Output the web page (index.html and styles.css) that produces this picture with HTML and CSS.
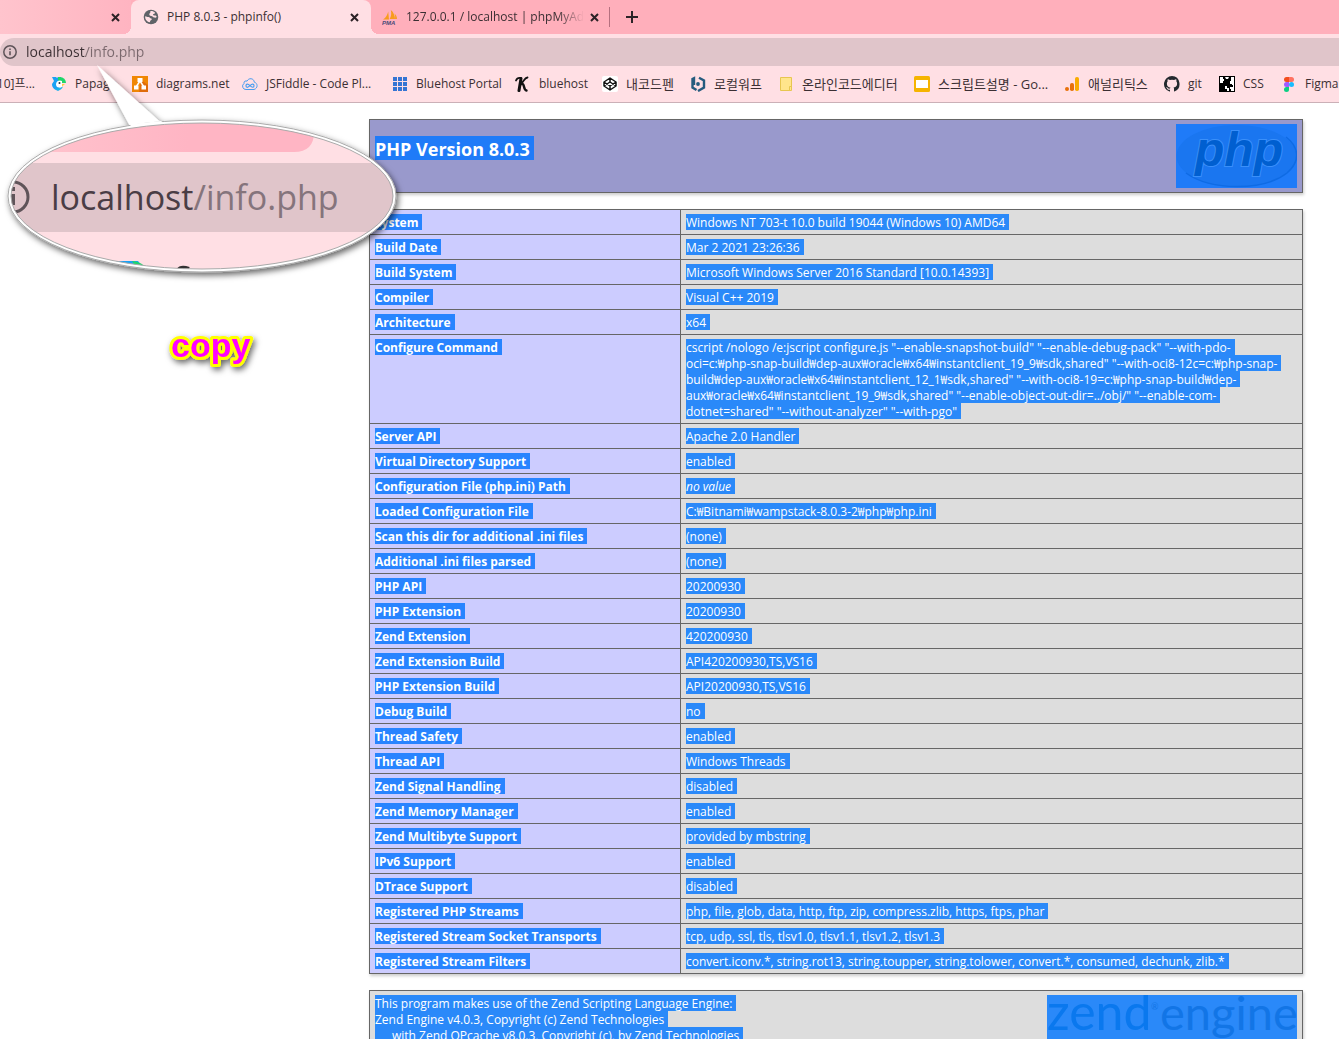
FILE: index.html
```html
<!DOCTYPE html>
<html lang="ko">
<head>
<meta charset="utf-8">
<title>PHP 8.0.3 - phpinfo()</title>
<link rel="stylesheet" href="styles.css">
</head>
<body>
<div class="page">
  <header class="browser">
    <nav class="tabs" aria-label="Tabs">
      <div class="tab tab-first">
        <button class="close" aria-label="Close tab"><svg width="9" height="9" viewBox="0 0 9 9"><path d="M1 1l7 7M8 1l-7 7"/></svg></button>
      </div>
      <div class="tab tab-active">
        <svg class="icon" viewBox="0 0 16 16"><circle cx="8" cy="8" r="7.3" fill="#5f6368"/><path d="M2.2 7.2c1.500 .4 2.300 .8 3.400 .7 1.200 0 1.300 1.300 2.600 1.500 1.200.2 .5 1.600-.6 2-.6.3-.3 1.300-.9 1.900C3.600 12.500 1.800 10 2.200 7.200zM7.300 2.200c1.800-.3 3.600.3 4.800 1.500-.3 1.200-1.500.8-2 1.600-.5.900 1 1.300 2 1.200 1-.1 1.200.5 1.600 1.300-.3.900-1.300 1.100-2.500.8-1.300-.3-1.500-1.300-2.900-1.500C6.600 6.900 6 5.800 6.400 4.700c.2-.7 1.300-.8.9-2.500z" fill="#ffdfe4"/></svg>
        <span class="tab-title">PHP 8.0.3 - phpinfo()</span>
        <button class="close" aria-label="Close tab"><svg width="9" height="9" viewBox="0 0 9 9"><path d="M1 1l7 7M8 1l-7 7"/></svg></button>
      </div>
      <div class="tab tab-last">
        <svg class="icon" viewBox="0 0 16 16"><path d="M1 10.500C4 9 5.500 5.500 6.200 2.500L7 10.500zM7.600 10C9.500 7 9.500 4 8.800 1c3 2 4 6 4.200 9zM13 10c.4-2 .2-4-.6-5.500 1.800 1.500 2.600 3.500 2.600 5.500z" fill="#f89c1c"/><text class="pma" x="0" y="16">PMA</text></svg>
        <span class="tab-title fade">127.0.0.1 / localhost | phpMyAd</span>
        <button class="close" aria-label="Close tab"><svg width="9" height="9" viewBox="0 0 9 9"><path d="M1 1l7 7M8 1l-7 7"/></svg></button>
      </div>
      <button class="new-tab" aria-label="New tab"><svg width="12" height="12" viewBox="0 0 12 12"><path d="M6 0v12M0 6h12"/></svg></button>
    </nav>
    <div class="address">
      <svg class="info" viewBox="0 0 14 14"><circle cx="7" cy="7" r="6.200" fill="none" stroke="#5f5459" stroke-width="1.500"/><path d="M7 6.200v4M7 3.500v1.500" stroke="#5f5459" stroke-width="1.600"/></svg>
      <input class="url" type="text" aria-label="Address" value="localhost/info.php">
    </div>
    <nav class="bookmarks" aria-label="Bookmarks">
      <a href="#" class="cut">10]프...</a>
      <a href="#"><svg class="icon" viewBox="0 0 16 16"><path d="M1 1h4l1 1 1-1h3v5l-2 8.500C4 14.500 1 12 1 8l2-3z" fill="#1ba1f3"/><path d="M7 1h2a6 6 0 0 1 6 6h-5L7 4z" fill="#1fd66a"/><path d="M5 9a4 4 0 0 1 6-4v6.500H8A3 3 0 0 1 5 9z" fill="#fff"/><path d="M3 12c3 1.500 6 0 9-1.500-1 3-4 4.500-6 4z" fill="#1bb6e8"/><circle cx="8.500" cy="7" r="1" fill="#234"/><path d="M11 8h3l-3 2.500z" fill="#ffcf40"/></svg>Papago</a>
      <a href="#"><svg class="icon" viewBox="0 0 16 16"><path d="M0 0h16v16H0z" fill="#f08705"/><path d="M9 4l7 5v7H7z" fill="#df6c0c"/><path d="M8 5L4 11M8 5l4 6" stroke="#fff" stroke-width="1.500"/><path d="M5.500 2h5v4h-5zM2 9.500h4.500v4H2zM9.500 9.500H14v4H9.500z" fill="#fff"/></svg>diagrams.net</a>
      <a href="#"><svg class="icon" viewBox="0 0 16 16" fill="none" stroke="#4a9df0"><path d="M4 13.500a3.300 3.300 0 0 1-2-6C1.500 5 4 4.500 5 5.200 6.500 1.500 12 2 12.300 6.200c3.500.8 4 6-.3 7.300z"/><path d="M8 9.700C5.500 7 4 8 4 9.700s1.500 2.500 4 0 4-1.500 4 0-1.500 2.500-4 0z" stroke-width="1.200"/></svg>JSFiddle - Code Pl...</a>
      <a href="#"><svg class="icon" viewBox="0 0 16 16" fill="#3575d3"><path d="M1 1h4v4H1zM6 1h4v4H6zM11 1h4v4h-4zM1 6h4v4H1zM6 6h4v4H6zM11 6h4v4h-4zM1 11h4v4H1zM6 11h4v4H6zM11 11h4v4h-4z"/></svg>Bluehost Portal</a>
      <a href="#"><svg class="icon" viewBox="0 0 16 16" fill="none" stroke="#111" stroke-linecap="round"><path d="M6 2.500L4 14.500" stroke-width="3"/><path d="M1 4.500c1-2.500 3-3 5-2.500M12.500 1.500C9.500 2 9 5 6 8" stroke-width="1.800"/><path d="M6.500 8c3.500-1 1.500 6 5 6.500" stroke-width="2.400"/></svg>bluehost</a>
      <a href="#" class="ko"><svg class="icon" viewBox="0 0 16 16"><rect width="16" height="16" rx="2" fill="#fff"/><path d="M8 2l6 4v4l-6 4-6-4V6zM8 2v4M8 10v4M2 6l6 4 6-4M2 10l6-4 6 4" fill="none" stroke="#111" stroke-width="1.500" stroke-linejoin="round"/></svg>내코드펜</a>
      <a href="#" class="ko"><svg class="icon" viewBox="0 0 16 16"><path d="M6.500 14L2.500 11.500V3L4 2.200V9M8 15l6-3.500v-7L9 1.800" fill="none" stroke="#265b7e" stroke-width="2.400"/><circle cx="8" cy="8" r="1.900" fill="#265b7e"/></svg>로컬워프</a>
      <a href="#" class="ko"><svg class="icon" viewBox="0 0 16 16"><path d="M2.500 1.500h11v10l-1 3h-10z" fill="#ffe58c" stroke="#e7c650"/><path d="M11.500 10.500h2v4h-2z" fill="#ffe58c" stroke="#e7c650"/></svg>온라인코드에디터</a>
      <a href="#" class="ko"><svg class="icon" viewBox="0 0 16 16"><rect width="16" height="16" rx="1.500" fill="#f5b400"/><path d="M2 4h12v8H2z" fill="#fff"/></svg>스크립트설명 - Go...</a>
      <a href="#" class="ko"><svg class="icon" viewBox="0 0 16 16"><rect x="11" y="1" width="4" height="14" rx="1.800" fill="#f9ab00"/><rect x="6" y="7" width="4" height="8" rx="1.800" fill="#e8710a"/><circle cx="3" cy="13" r="2" fill="#e8710a"/></svg>애널리틱스</a>
      <a href="#"><svg class="icon" viewBox="0 0 16 16"><path d="M8 0a8 8 0 0 0-2.500 15.600c.4.100.5-.2.500-.4v-1.500c-2.200.5-2.700-1-2.700-1-.4-.9-.9-1.200-.9-1.200-.7-.5.100-.5.100-.5.800.1 1.200.8 1.200.8.700 1.200 1.900.9 2.300.7.100-.5.300-.9.500-1.100-1.800-.2-3.600-.9-3.600-4 0-.9.300-1.600.8-2.100-.1-.2-.4-1 .1-2.100 0 0 .7-.2 2.200.8a7.600 7.600 0 0 1 4 0c1.500-1 2.200-.8 2.200-.8.400 1.100.2 1.900.1 2.100.5.500.8 1.200.8 2.100 0 3.100-1.900 3.700-3.600 3.900.3.300.5.800.5 1.500v2.200c0 .2.100.5.500.4A8 8 0 0 0 8 0z" fill="#24292e"/></svg>git</a>
      <a href="#"><svg class="icon" viewBox="0 0 16 16"><path d="M0 0h16v16H0z" fill="#000"/><path d="M1 1h3v2h1v2H4v2H1zM12 1h3v14h-3v-2h-1v-2h2V8h-2V5h1zM6 1h4l-1 2H7zM6 10h2v2h2v3H8v-2H6z" fill="#fff"/><path d="M13 9h1v2h-1z" fill="#000"/></svg>CSS</a>
      <a href="#"><svg class="icon" viewBox="0 0 16 16"><path d="M5.500 1H8v5H5.500a2.500 2.500 0 0 1 0-5z" fill="#f24e1e"/><path d="M8 1h2.500a2.500 2.500 0 0 1 0 5H8z" fill="#ff7262"/><path d="M5.500 6H8v5H5.500a2.500 2.500 0 0 1 0-5z" fill="#a259ff"/><circle cx="10.500" cy="8.500" r="2.500" fill="#1abcfe"/><path d="M5.500 11H8v2.500A2.500 2.500 0 1 1 5.500 11z" fill="#0acf83"/></svg>Figma</a>
    </nav>
  </header>

  <main class="content">
    <section class="title-box">
      <h1><span class="sel">PHP Version 8.0.3</span></h1>
      <svg class="php-logo" viewBox="0 0 121 64" role="img" aria-label="PHP logo">
        <path d="M0 0h121v64H0z" fill="#1f7bf8"/>
        <ellipse cx="60.500" cy="32" rx="60" ry="31" fill="#1a76f0"/>
        <path d="M10 49C35 67 88 67 111 49c14-12 12-26-1-36" fill="none" stroke="#0f6be4" stroke-width="1.500"/>
        <text class="php-word" x="19" y="42">php</text>
      </svg>
    </section>

    <table class="info-table">
      <tbody>
        <tr><th scope="row"><span class="sel">System</span></th><td><span class="sel">Windows NT 703-t 10.0 build 19044 (Windows 10) AMD64</span></td></tr>
        <tr><th scope="row"><span class="sel">Build Date</span></th><td><span class="sel">Mar 2 2021 23:26:36</span></td></tr>
        <tr><th scope="row"><span class="sel">Build System</span></th><td><span class="sel">Microsoft Windows Server 2016 Standard [10.0.14393]</span></td></tr>
        <tr><th scope="row"><span class="sel">Compiler</span></th><td><span class="sel">Visual C++ 2019</span></td></tr>
        <tr><th scope="row"><span class="sel">Architecture</span></th><td><span class="sel">x64</span></td></tr>
        <tr><th scope="row"><span class="sel">Configure Command</span></th><td class="command"><span class="sel">cscript /nologo /e:jscript configure.js "--enable-snapshot-build" "--enable-debug-pack" "--with-pdo-</span><span class="sel">oci=c:₩php-snap-build₩dep-aux₩oracle₩x64₩instantclient_19_9₩sdk,shared" "--with-oci8-12c=c:₩php-snap-</span><span class="sel">build₩dep-aux₩oracle₩x64₩instantclient_12_1₩sdk,shared" "--with-oci8-19=c:₩php-snap-build₩dep-</span><span class="sel">aux₩oracle₩x64₩instantclient_19_9₩sdk,shared" "--enable-object-out-dir=../obj/" "--enable-com-</span><span class="sel">dotnet=shared" "--without-analyzer" "--with-pgo"</span></td></tr>
        <tr><th scope="row"><span class="sel">Server API</span></th><td><span class="sel">Apache 2.0 Handler</span></td></tr>
        <tr><th scope="row"><span class="sel">Virtual Directory Support</span></th><td><span class="sel">enabled</span></td></tr>
        <tr><th scope="row"><span class="sel">Configuration File (php.ini) Path</span></th><td><i class="sel">no value</i></td></tr>
        <tr><th scope="row"><span class="sel">Loaded Configuration File</span></th><td><span class="sel">C:₩Bitnami₩wampstack-8.0.3-2₩php₩php.ini</span></td></tr>
        <tr><th scope="row"><span class="sel">Scan this dir for additional .ini files</span></th><td><span class="sel">(none)</span></td></tr>
        <tr><th scope="row"><span class="sel">Additional .ini files parsed</span></th><td><span class="sel">(none)</span></td></tr>
        <tr><th scope="row"><span class="sel">PHP API</span></th><td><span class="sel">20200930</span></td></tr>
        <tr><th scope="row"><span class="sel">PHP Extension</span></th><td><span class="sel">20200930</span></td></tr>
        <tr><th scope="row"><span class="sel">Zend Extension</span></th><td><span class="sel">420200930</span></td></tr>
        <tr><th scope="row"><span class="sel">Zend Extension Build</span></th><td><span class="sel">API420200930,TS,VS16</span></td></tr>
        <tr><th scope="row"><span class="sel">PHP Extension Build</span></th><td><span class="sel">API20200930,TS,VS16</span></td></tr>
        <tr><th scope="row"><span class="sel">Debug Build</span></th><td><span class="sel">no</span></td></tr>
        <tr><th scope="row"><span class="sel">Thread Safety</span></th><td><span class="sel">enabled</span></td></tr>
        <tr><th scope="row"><span class="sel">Thread API</span></th><td><span class="sel">Windows Threads</span></td></tr>
        <tr><th scope="row"><span class="sel">Zend Signal Handling</span></th><td><span class="sel">disabled</span></td></tr>
        <tr><th scope="row"><span class="sel">Zend Memory Manager</span></th><td><span class="sel">enabled</span></td></tr>
        <tr><th scope="row"><span class="sel">Zend Multibyte Support</span></th><td><span class="sel">provided by mbstring</span></td></tr>
        <tr><th scope="row"><span class="sel">IPv6 Support</span></th><td><span class="sel">enabled</span></td></tr>
        <tr><th scope="row"><span class="sel">DTrace Support</span></th><td><span class="sel">disabled</span></td></tr>
        <tr><th scope="row"><span class="sel">Registered PHP Streams</span></th><td><span class="sel">php, file, glob, data, http, ftp, zip, compress.zlib, https, ftps, phar</span></td></tr>
        <tr><th scope="row"><span class="sel">Registered Stream Socket Transports</span></th><td><span class="sel">tcp, udp, ssl, tls, tlsv1.0, tlsv1.1, tlsv1.2, tlsv1.3</span></td></tr>
        <tr><th scope="row"><span class="sel">Registered Stream Filters</span></th><td><span class="sel">convert.iconv.*, string.rot13, string.toupper, string.tolower, convert.*, consumed, dechunk, zlib.*</span></td></tr>
      </tbody>
    </table>

    <section class="zend-box">
      <p class="zend-text">
        <span class="sel">This program makes use of the Zend Scripting Language Engine:</span>
        <span class="sel">Zend Engine v4.0.3, Copyright (c) Zend Technologies</span>
        <span class="sel indent">with Zend OPcache v8.0.3, Copyright (c), by Zend Technologies</span>
      </p>
      <svg class="zend-logo" viewBox="0 0 250 60" role="img" aria-label="Zend Engine logo">
        <path d="M0 0h250v60H0z" fill="#2a89f9"/>
        <text class="zend-word" x="0" y="35">zend</text>
        <text class="zend-reg" x="104" y="15">®</text>
        <text class="engine-word" x="113" y="35">engine</text>
      </svg>
    </section>
  </main>

  <svg class="overlay" width="420" height="400" viewBox="0 0 420 400">
    <defs>
      <clipPath id="lens"><ellipse cx="202" cy="196" rx="191" ry="73"/></clipPath>
      <filter id="shadow" x="-20%" y="-20%" width="140%" height="160%"><feDropShadow dx="2" dy="3" stdDeviation="3" flood-color="#000" flood-opacity="0.6"/></filter>
      <linearGradient id="tabfill"><stop offset="0" stop-color="#ffc6cf"/><stop offset="0.600" stop-color="#ffb5c4"/></linearGradient>
    </defs>
    <g filter="url(#shadow)">
      <path d="M97 65L131 128H167z" fill="#fff"/>
      <ellipse cx="202" cy="196" rx="194" ry="76" fill="#fff" stroke="#aaa"/>
      <path d="M130 124l31-3 8 6h-38z" fill="#fff"/>
    </g>
    <g clip-path="url(#lens)">
      <path d="M0 110h420v170H0z" fill="#ffdfe4"/>
      <path d="M0 110h314v22q0 20-20 20H0z" fill="url(#tabfill)"/>
      <path d="M0 163h420v69H0z" fill="#e0c5ca"/>
      <circle cx="13" cy="197" r="15" fill="none" stroke="#5f5459" stroke-width="3"/>
      <path d="M13 194v11M13 187v4" stroke="#5f5459" stroke-width="4"/>
      <text class="lens-text" x="51" y="210">localhost<tspan class="path">/info.php</tspan></text>
      <path d="M116 261h22l8 10h-30z" fill="#1ba1f3"/><path d="M132 261q12 1 16 10h-10z" fill="#1fd66a"/>
      <path d="M178 271q2-5 11-2" fill="none" stroke="#333" stroke-width="4"/>
    </g>
    <ellipse cx="202" cy="196" rx="191" ry="73" fill="none" stroke="#aaa"/>
    <text class="copy" x="171" y="357" filter="url(#shadow)">copy</text>
  </svg>
</div>
</body>
</html>
```
FILE: styles.css
```css
* { box-sizing: border-box; }

body {
  margin: 0;
  background: #fff;
  font-family: "Open Sans", "Noto Sans CJK KR", sans-serif;
  font-size: 12px;
  line-height: 16px;
  color: #3b2f33;
}

button {
  padding: 0;
  border: 0;
  background: none;
  display: flex;
  align-items: center;
  justify-content: center;
}

.page {
  position: relative;
  height: 100vh;
  overflow: hidden;
}

/* browser chrome */
.browser {
  background: #ffdfe4;
  border-bottom: 1px solid #cbb0b7;
}

.tabs {
  display: flex;
  height: 34px;
  background: #ffafbb;
}

.tab {
  display: flex;
  align-items: center;
  width: 240px;
  padding: 0 10px 0 12px;
  gap: 8px;
}

.tab-first {
  width: 131px;
  justify-content: flex-end;
  padding-right: 9px;
  background: linear-gradient(90deg, #ffc4cd, #ffb4c1);
}

.tab-active {
  position: relative;
  background: #ffdfe4;
  border-radius: 8px 8px 0 0;
}

.tab-active::before,
.tab-active::after {
  content: "";
  position: absolute;
  bottom: 0;
  width: 8px;
  height: 8px;
}

.tab-active::before {
  left: -8px;
  background: radial-gradient(circle at 0 0, transparent 8px, #ffdfe4 8px);
}

.tab-active::after {
  right: -8px;
  background: radial-gradient(circle at 100% 0, transparent 8px, #ffdfe4 8px);
}

.tab-last {
  padding-left: 11px;
  gap: 4px;
}

.tab-last .icon {
  margin-right: 4px;
}

.tab-title {
  flex: 1;
  white-space: nowrap;
}

.fade {
  -webkit-mask-image: linear-gradient(90deg, #000 85%, transparent);
  mask-image: linear-gradient(90deg, #000 85%, transparent);
}

.icon {
  flex: none;
  width: 16px;
  height: 16px;
}

.close {
  width: 13px;
  height: 16px;
}

.close path,
.new-tab path {
  fill: none;
  stroke: #2c2226;
  stroke-width: 2;
}

.new-tab {
  position: relative;
  width: 42px;
  height: 34px;
}

.new-tab::before {
  content: "";
  position: absolute;
  left: -2px;
  top: 7px;
  width: 1px;
  height: 20px;
  background: #b5707f;
}

.pma {
  font: italic bold 6px "Liberation Sans", sans-serif;
  fill: #4a4a78;
}

.address {
  display: flex;
  align-items: center;
  gap: 9px;
  height: 28px;
  margin-top: 4px;
  padding-left: 3px;
  background: #e0c5ca;
  border-radius: 14px 0 0 14px;
}

.info {
  flex: none;
  width: 14px;
  height: 14px;
}

.url {
  flex: 1;
  border: 0;
  padding: 0;
  font-family: inherit;
  font-size: 14px;
  line-height: 20px;
  background: linear-gradient(90deg, #3b2f33 59px, #7a686d 59px);
  -webkit-background-clip: text;
  background-clip: text;
  color: transparent;
}

.bookmarks {
  display: grid;
  grid-template-columns: 51px 81px 110px 150px 123px 87px 88px 88px 136px 150px 100px 55px 62px auto;
  align-items: center;
  height: 36px;
}

.bookmarks a {
  display: flex;
  align-items: center;
  gap: 8px;
  white-space: nowrap;
  color: inherit;
  text-decoration: none;
}

.bookmarks .ko {
  font-size: 13px;
}

.bookmarks .cut {
  justify-content: flex-end;
  padding-right: 16px;
}

/* phpinfo page */
.content {
  display: flex;
  flex-direction: column;
  gap: 16px;
  padding: 16px 36px 0 369px;
  color: #fff;
}

.sel {
  display: block;
  width: fit-content;
  height: 16px;
  line-height: 18px;
  padding-right: 4px;
  white-space: nowrap;
  background: #2a89f9;
}

.title-box,
.info-table,
.zend-box {
  box-shadow: 1px 2px 3px #ccc;
}

.title-box,
.zend-box {
  display: flex;
  justify-content: space-between;
  align-items: flex-start;
  padding: 4px 5px;
  border: 1px solid #666;
}

.title-box {
  background: #9999cc;
}

h1 {
  margin: 12px 0 0;
  font-size: 18px;
}

h1 .sel {
  height: 24px;
  line-height: 26px;
  background: #1f7bf8;
}

.php-logo {
  width: 121px;
  height: 64px;
}

.php-word {
  font: italic bold 48px "Liberation Sans", sans-serif;
  fill: #005fd0;
  stroke: #3a90fb;
  stroke-width: 2px;
  paint-order: stroke;
}

.info-table {
  width: 100%;
  border-collapse: collapse;
}

.info-table th,
.info-table td {
  padding: 4px 5px;
  border: 1px solid #666;
  text-align: left;
  vertical-align: top;
}

.info-table th {
  width: 311px;
  background: #ccccff;
}

.info-table th .sel {
  background: #2884ff;
}

.info-table td {
  background: #dddddd;
}

.zend-box {
  background: #dddddd;
}

.zend-text {
  margin: 0;
}

.indent {
  padding-left: 17px;
}

.zend-logo {
  width: 250px;
  height: 60px;
}

.zend-word {
  font: 50px "Lato", sans-serif;
  fill: #0a78ee;
}

.zend-reg {
  font: 9px "Lato", sans-serif;
  fill: #1275e6;
}

.engine-word {
  font: 47px "Lato", sans-serif;
  fill: #1275e6;
}

/* annotations laid over the page */
.overlay {
  position: absolute;
  left: 0;
  top: 0;
  pointer-events: none;
}

.lens-text {
  font: 34px "Open Sans", sans-serif;
  fill: #4a3d45;
}

.lens-text .path {
  fill: #85747c;
}

.copy {
  font: bold 34px "Liberation Sans", sans-serif;
  fill: #ff00ff;
  stroke: #ffff00;
  stroke-width: 6px;
  stroke-linejoin: round;
  paint-order: stroke;
}
```
